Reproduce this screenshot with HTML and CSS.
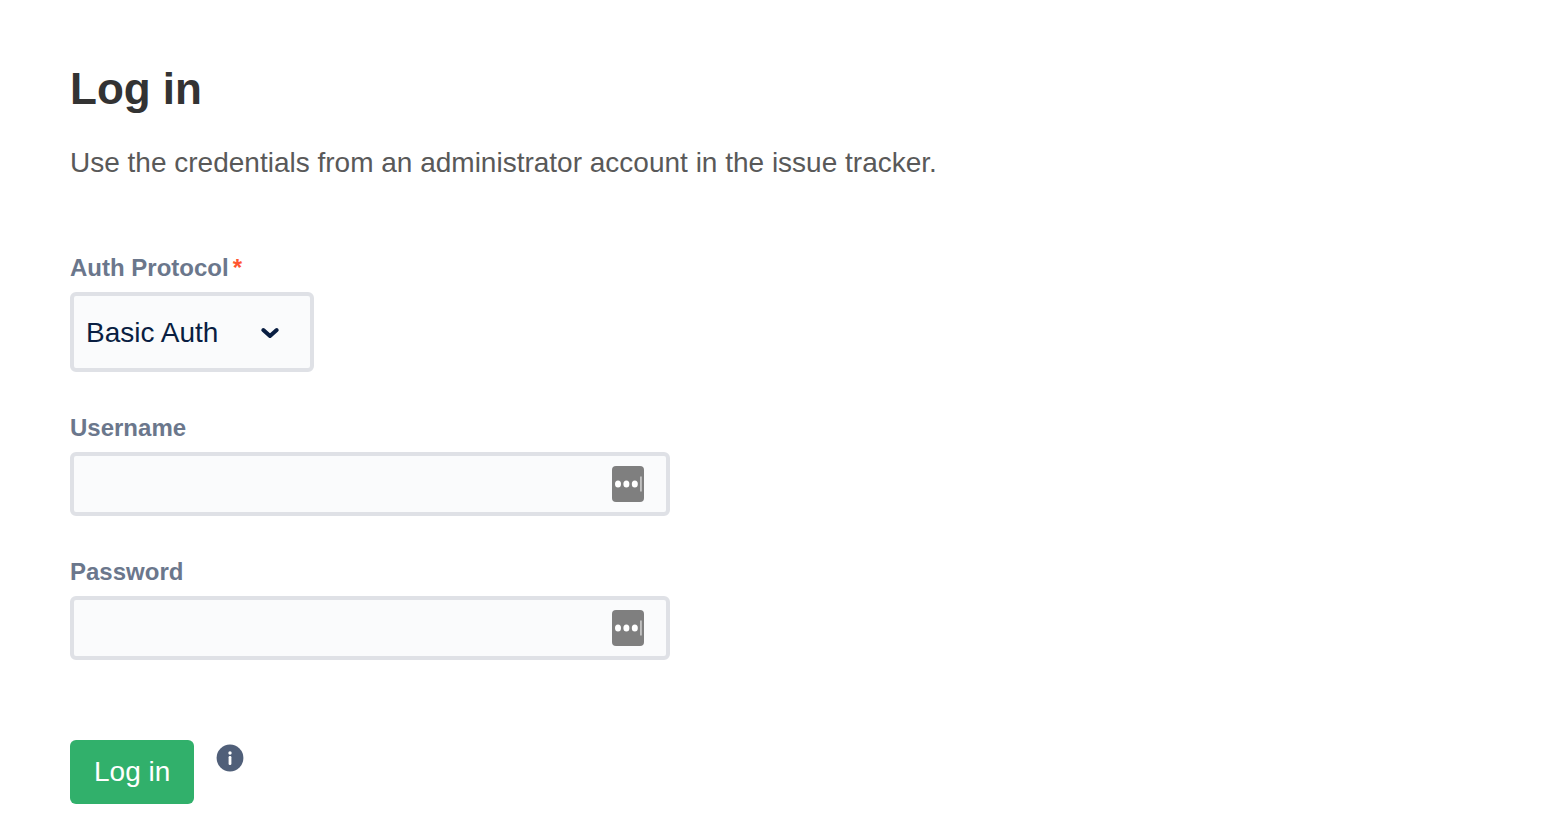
FILE: index.html
```html
<!DOCTYPE html>
<html lang="en">
<head>
<meta charset="utf-8">
<title>Log in</title>
<meta name="viewport" content="width=device-width, initial-scale=1">
<link rel="stylesheet" href="styles.css">
</head>
<body>
<main class="login">
  <h1 class="title">Log in</h1>
  <p class="intro">Use the credentials from an administrator account in the issue tracker.</p>
  <form class="form">
    <div class="field">
      <label class="label" for="auth">Auth Protocol<span class="required">*</span></label>
      <div class="select-wrap">
        <select class="control select" id="auth"><option>Basic Auth</option></select>
        <svg class="chevron" viewBox="0 0 20 12" aria-hidden="true"><path d="M3.300 3 10 9 16.700 3"/></svg>
      </div>
    </div>
    <div class="field">
      <label class="label" for="username">Username</label>
      <div class="input-wrap">
        <input class="control input" id="username" type="text">
        <svg class="autofill" viewBox="0 0 32 36" aria-hidden="true"><rect width="32" height="36" rx="4" fill="#7f7f7f"/><g fill="#fff"><ellipse cx="6" cy="18" rx="3" ry="3.600"/><ellipse cx="14.400" cy="18" rx="3" ry="3.600"/><ellipse cx="22.800" cy="18" rx="3" ry="3.600"/><rect x="28.300" y="10.500" width="1.300" height="15" fill="#ddd"/></g></svg>
      </div>
    </div>
    <div class="field">
      <label class="label" for="password">Password</label>
      <div class="input-wrap">
        <input class="control input" id="password" type="password">
        <svg class="autofill" viewBox="0 0 32 36" aria-hidden="true"><rect width="32" height="36" rx="4" fill="#7f7f7f"/><g fill="#fff"><ellipse cx="6" cy="18" rx="3" ry="3.600"/><ellipse cx="14.400" cy="18" rx="3" ry="3.600"/><ellipse cx="22.800" cy="18" rx="3" ry="3.600"/><rect x="28.300" y="10.500" width="1.300" height="15" fill="#ddd"/></g></svg>
      </div>
    </div>
    <div class="actions">
      <button class="submit" type="submit">Log in</button>
      <svg class="info" viewBox="0 0 28 28" role="img" aria-label="Information"><circle cx="14" cy="14" r="13.400" fill="#505f79"/><circle cx="14" cy="9" r="1.700" fill="#fff"/><rect x="12.600" y="12" width="2.800" height="9" rx="1.200" fill="#fff"/></svg>
    </div>
  </form>
</main>
</body>
</html>
```
FILE: styles.css
```css
* { box-sizing: border-box; }
body {
  margin: 0;
  background: #fff;
  font-family: "Liberation Sans", Arial, sans-serif;
  color: #333;
}
.login { padding: 64px 70px 32px; }
.title { margin: 0; font-size: 44px; line-height: 50px; }
.intro { margin: 32px 0 0; font-size: 28px; line-height: 34px; color: #595959; }
.form { margin-top: 72px; }
.field { margin-bottom: 40px; }
.label {
  display: block;
  margin-bottom: 8px;
  font-size: 24px;
  font-weight: 700;
  line-height: 32px;
  color: #6b778c;
}
.required { margin-left: 4px; color: #ff5630; }
.select-wrap { position: relative; width: 244px; }
.input-wrap { position: relative; max-width: 600px; }
.control {
  display: block;
  width: 100%;
  margin: 0;
  border: 4px solid #dfe1e6;
  border-radius: 6px;
  background: #fafbfc;
  font-family: inherit;
  font-size: 28px;
  color: #091e42;
}
.select { height: 80px; padding: 0 52px 0 12px; appearance: none; }
.input { height: 64px; padding: 0 68px 0 12px; }
.chevron {
  position: absolute;
  top: 35px;
  right: 34px;
  width: 20px;
  height: 12px;
  fill: none;
  stroke: #091e42;
  stroke-width: 4;
  stroke-linecap: round;
  stroke-linejoin: round;
  pointer-events: none;
}
.autofill { position: absolute; top: 14px; right: 26px; width: 32px; height: 36px; }
.actions { display: flex; align-items: flex-start; gap: 22px; margin-top: 80px; }
.submit {
  height: 64px;
  padding: 0 24px;
  border: 0;
  border-radius: 6px;
  background: #31b06b;
  font-family: inherit;
  font-size: 28px;
  color: #fff;
}
.info { width: 28px; height: 28px; margin-top: 4px; }
```
